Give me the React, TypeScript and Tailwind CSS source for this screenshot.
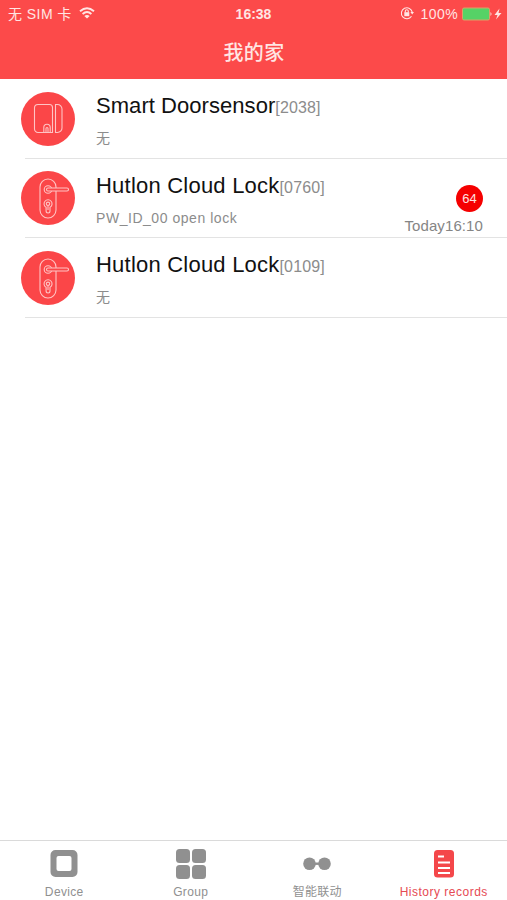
import React from "react";

const cjk = 'font-["Liberation_Sans","Noto_Sans_CJK_SC",sans-serif]';

function DoorSensorIcon() {
  return (
    <svg width="54" height="54" viewBox="0 0 54 54" fill="none" stroke="#ffc4c4" strokeWidth="1.1">
      <path d="M17 12.500H28.500A3 3 0 0 1 31.500 15.500V40.500H17A3.500 3.500 0 0 1 13.500 37V16A3.500 3.500 0 0 1 17 12.500Z" />
      <path d="M34.500 12.500H36.500A4.500 4.500 0 0 1 41 17V36A4.500 4.500 0 0 1 36.500 40.500H34.500Z" />
      <path d="M22.800 40V35.500A3.200 3.200 0 0 1 29.200 35.500V40M25 40V36.500A1 1 0 0 1 27 36.500V40" />
    </svg>
  );
}

function LockIcon() {
  return (
    <svg width="54" height="54" viewBox="0 0 54 54" fill="none" stroke="#ffc4c4" strokeWidth="1.1">
      <rect x="19" y="8" width="16" height="39" rx="8" />
      <circle cx="27" cy="18.500" r="3.800" />
      <path d="M27 17H46A1.500 1.500 0 0 1 46 20H27A1.500 1.500 0 0 1 27 17Z" fill="#fb4648" />
      <path d="M25.100 36.300A4 4 0 1 1 29 36.300V40A1.900 1.900 0 0 1 25.100 40Z" />
      <circle cx="27" cy="32.800" r="1.700" />
      <path d="M27 34.500V39" />
    </svg>
  );
}

type RowProps = {
  icon: React.ReactNode;
  name: string;
  id: string;
  detail: string;
  spacing: string;
  count?: number;
  time?: string;
};

function Row({ icon, name, id, detail, spacing, count, time }: RowProps) {
  return (
    <li className="flex h-[79.5px] pl-[21px]">
      <div className="mt-[12.5px] h-[54px] w-[54px] shrink-0 rounded-full bg-[#fb4648]">{icon}</div>
      <div className="ml-[21px] min-w-0 flex-1 pt-[14px]">
        <div className="h-[26px] whitespace-nowrap text-[22px] leading-[26px] text-[#111]">
          <span className={spacing}>{name}</span>
          <span className="text-[16px] tracking-[0.15px] text-[#8c8c8c]">{id}</span>
        </div>
        <div className="mt-[9px] h-5 whitespace-nowrap text-[14px] leading-5 tracking-[0.54px] text-[#8c8c8c]">{detail}</div>
      </div>
      {count !== undefined && (
        <div className="flex flex-col items-end pr-[24px] pt-[26px]">
          <div className="h-[27px] w-[27px] rounded-full bg-[#f50000] text-center text-[13px] leading-[27px] text-[#ffe0e0]">{count}</div>
          <div className="mt-[4px] h-5 text-[15px] leading-5 tracking-[0.1px] text-[#858585]">{time}</div>
        </div>
      )}
    </li>
  );
}

function Divider() {
  return <li className="-mt-px ml-[25px] h-px bg-[#e3e3e3]" />;
}

function Tab({ icon, label, active = false, spacing = "" }: { icon: React.ReactNode; label: string; active?: boolean; spacing?: string }) {
  return (
    <div className={"flex flex-1 flex-col items-center pt-[7px] " + (active ? "text-[#e64a53]" : "text-[#909090]")}>
      <div className="h-8">{icon}</div>
      <div className={"mt-[4px] whitespace-nowrap text-[12px] leading-4 " + spacing}>{label}</div>
    </div>
  );
}

export default function App() {
  return (
    <main className={"flex h-[900px] w-[507px] flex-col overflow-hidden bg-white " + cjk}>
      <header className="h-[79px] shrink-0 bg-[#fc4a4a] text-[#ffe5e3]">
        <div className="grid h-[28px] grid-cols-3 items-center text-[14px] leading-[28px]">
          <div className="flex items-center pl-2">
            <span className="whitespace-nowrap tracking-[0.45px]">无 SIM 卡</span>
            <svg className="ml-[7px] -mt-[2px]" width="16" height="12" viewBox="0 0 16 12" fill="none" stroke="currentColor" strokeWidth="1.900">
              <path d="M1 4.300Q8-2 15 4.300M3.600 7Q8 3 12.400 7" />
              <path d="M8 11.500L5.300 8.900Q8 6.900 10.700 8.900Z" fill="currentColor" stroke="none" />
            </svg>
          </div>
          <div className="text-center font-bold">16:38</div>
          <div className="flex items-center justify-end pr-[5px]">
            <svg className="-mt-[2px]" width="14" height="14" viewBox="0 0 14 14" fill="none" stroke="currentColor" strokeWidth="1.100">
              <path d="M11.500 10.300A5.500 5.500 0 1 1 12.300 6.300" />
              <path d="M10.400 6H14L12.200 8.500Z" fill="currentColor" stroke="none" />
              <rect x="4.300" y="6.200" width="5" height="4" fill="currentColor" stroke="none" />
              <path d="M5.300 6.500V5.200A1.500 1.500 0 0 1 8.300 5.200V6.500" />
            </svg>
            <span className="ml-[7px] tracking-[0.4px]">100%</span>
            <svg className="ml-[4px] -mt-[1px]" width="31" height="14" viewBox="0 0 31 14">
              <rect x="0.500" y="1" width="27" height="12" rx="1.500" fill="#56d266" stroke="#d9a267" />
              <path d="M28.500 5Q30.500 7 28.500 9Z" fill="#ffe5e3" />
            </svg>
            <svg className="ml-[1px] -mt-[1px]" width="8" height="12" viewBox="0 0 8 12" fill="currentColor">
              <path d="M5.500 0.500L0.500 7H3.500L2 11.500L7.500 5H4.500Z" />
            </svg>
          </div>
        </div>
        <h1 className="h-[50px] pl-[1px] text-center text-[20px] font-medium leading-[50px] tracking-[0.4px]">我的家</h1>
      </header>

      <ul className="flex-1">
        <Row icon={<DoorSensorIcon />} name="Smart Doorsensor" id="[2038]" detail="无" spacing="tracking-[0.05px]" />
        <Divider />
        <Row icon={<LockIcon />} name="Hutlon Cloud Lock" id="[0760]" detail="PW_ID_00 open lock" spacing="tracking-[0.22px]" count={64} time="Today16:10" />
        <Divider />
        <Row icon={<LockIcon />} name="Hutlon Cloud Lock" id="[0109]" detail="无" spacing="tracking-[0.22px]" />
        <Divider />
      </ul>

      <nav className="flex h-[60px] shrink-0 border-t border-[#dadada] pl-px">
        <Tab
          label="Device"
          spacing="tracking-[0.35px]"
          icon={
            <svg width="32" height="32" viewBox="0 0 32 32">
              <path fill="currentColor" fillRule="evenodd" d="M7.500 2H24.500A5 5 0 0 1 29.500 7V24A5 5 0 0 1 24.500 29H7.500A5 5 0 0 1 2.500 24V7A5 5 0 0 1 7.500 2ZM10.500 8A2 2 0 0 0 8.500 10V21A2 2 0 0 0 10.500 23H21.500A2 2 0 0 0 23.500 21V10A2 2 0 0 0 21.500 8Z" />
            </svg>
          }
        />
        <Tab
          label="Group"
          spacing="tracking-[0.35px]"
          icon={
            <svg width="32" height="32" viewBox="0 0 32 32" fill="currentColor">
              <rect x="1" y="1" width="14" height="14" rx="3.500" />
              <rect x="17" y="1" width="14" height="14" rx="3.500" />
              <rect x="1" y="17" width="14" height="14" rx="3.500" />
              <rect x="17" y="17" width="14" height="14" rx="3.500" />
            </svg>
          }
        />
        <Tab
          label="智能联动"
          spacing="tracking-[0.3px]"
          icon={
            <svg width="32" height="32" viewBox="0 0 32 32" fill="currentColor">
              <circle cx="8.500" cy="15.700" r="6.300" />
              <circle cx="23.500" cy="15.700" r="6.300" />
              <rect x="12" y="14.500" width="8" height="2.400" />
            </svg>
          }
        />
        <Tab
          active
          label="History records"
          spacing="tracking-[0.5px]"
          icon={
            <svg width="32" height="32" viewBox="0 0 32 32">
              <rect x="6" y="2" width="20" height="27.500" rx="3.500" fill="#f4474a" />
              <path d="M10 8.500H16M10 14.500H22M10 20H22M10 25H22" stroke="#fff" strokeWidth="2" />
            </svg>
          }
        />
      </nav>
    </main>
  );
}
